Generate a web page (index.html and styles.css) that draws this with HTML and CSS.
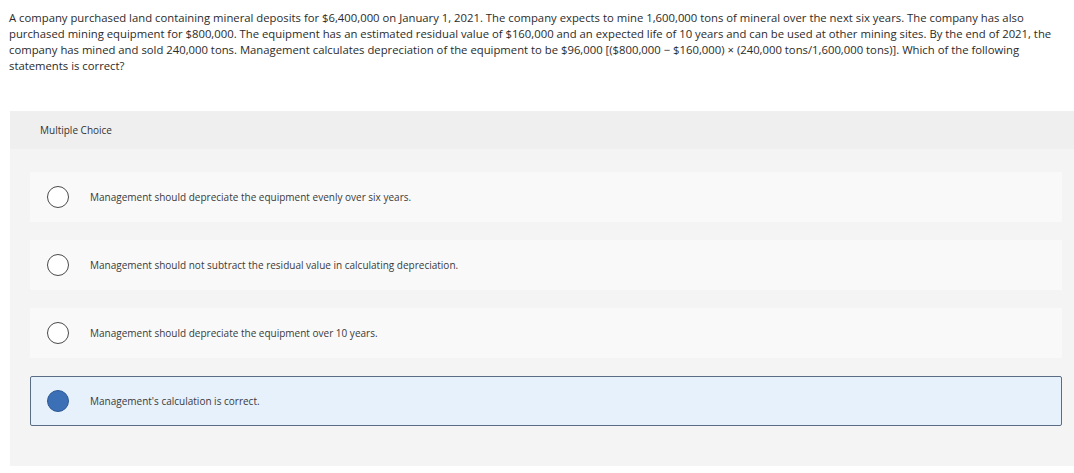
FILE: index.html
```html
<!DOCTYPE html>
<html>
<head>
<meta charset="utf-8">
<link rel="stylesheet" href="styles.css">
</head>
<body>
<p class="question">A company purchased land containing mineral deposits for $6,400,000 on January 1, 2021. The company expects to mine 1,600,000 tons of mineral over the next six years. The company has also<br>purchased mining equipment for $800,000. The equipment has an estimated residual value of $160,000 and an expected life of 10 years and can be used at other mining sites. By the end of 2021, the<br>company has mined and sold 240,000 tons. Management calculates depreciation of the equipment to be $96,000 [($800,000 − $160,000) × (240,000 tons/1,600,000 tons)]. Which of the following<br>statements is correct?</p>
<section class="panel">
  <div class="panel-head">Multiple Choice</div>
  <div class="panel-body">
    <div class="option"><span class="radio"></span><span class="label">Management should depreciate the equipment evenly over six years.</span></div>
    <div class="option"><span class="radio"></span><span class="label">Management should not subtract the residual value in calculating depreciation.</span></div>
    <div class="option"><span class="radio"></span><span class="label">Management should depreciate the equipment over 10 years.</span></div>
    <div class="option selected"><span class="radio"></span><span class="label">Management's calculation is correct.</span></div>
  </div>
</section>
</body>
</html>
```
FILE: styles.css
```css
html, body {
  margin: 0;
  padding: 0;
  background: #ffffff;
}
body {
  font-family: "Open Sans", "Liberation Sans", sans-serif;
  color: #333333;
}
.question {
  margin: 0;
  padding: 10px 0 0 9px;
  font-size: 11.3px;
  line-height: 16px;
  color: #2b2b2b;
  white-space: nowrap;
}
.panel {
  margin: 37px 0 0 10px;
  background: #f4f4f4;
}
.panel-head {
  height: 38px;
  display: flex;
  align-items: center;
  padding-left: 30px;
  background: #efefef;
  font-size: 10px;
  color: #333333;
}
.panel-body {
  display: flex;
  flex-direction: column;
  gap: 18px;
  padding: 23px 12px 40px 20px;
}
.option {
  height: 50px;
  box-sizing: border-box;
  display: flex;
  align-items: center;
  padding-left: 17px;
  background: #f9f9f9;
}
.radio {
  width: 22px;
  height: 22px;
  box-sizing: border-box;
  border: 1px solid #4a4a4a;
  border-radius: 50%;
  background: #ffffff;
  flex: none;
}
.label {
  margin-left: 21px;
  font-size: 10px;
  color: #3a3a3a;
}
.option.selected {
  background: #e7f1fc;
  border: 1px solid #5b6d85;
  border-radius: 2px;
  padding-left: 16px;
}
.option.selected .radio {
  background: #3b6fb6;
  border-color: #2e5a94;
}
```
